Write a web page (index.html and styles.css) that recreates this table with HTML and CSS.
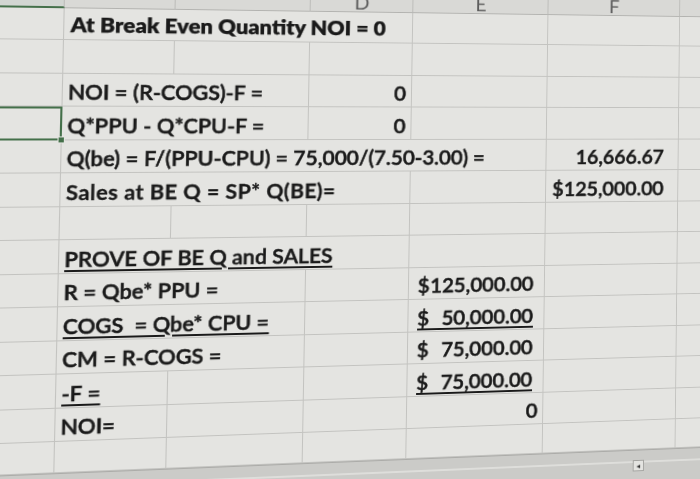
FILE: index.html
```html
<!DOCTYPE html>
<html lang="en">
<head>
<meta charset="utf-8">
<title>Break Even</title>
<link rel="stylesheet" href="styles.css">
</head>
<body>
<div class="sheet">
  <div class="grid">
    <div class="hd hd-a"></div><div class="hd"></div><div class="hd"></div><div class="hd">D</div><div class="hd">E</div><div class="hd">F</div><div class="hd"></div>

    <div class="c"></div><div class="c s3 b title">At Break Even Quantity NOI = 0</div><div class="c"></div><div class="c"></div><div class="c"></div>

    <div class="c"></div><div class="c"></div><div class="c"></div><div class="c"></div><div class="c"></div><div class="c"></div><div class="c"></div>

    <div class="c"></div><div class="c s2">NOI = (R-COGS)-F =</div><div class="c r">0</div><div class="c"></div><div class="c"></div><div class="c"></div>

    <div class="c sel"></div><div class="c s2">Q*PPU - Q*CPU-F =</div><div class="c r">0</div><div class="c"></div><div class="c"></div><div class="c"></div>

    <div class="c"></div><div class="c s4">Q(be) = F/(PPU-CPU) = 75,000/(7.50-3.00) =</div><div class="c r pad">16,666.67</div><div class="c"></div>

    <div class="c"></div><div class="c s3 sb">Sales at BE Q = SP* Q(BE)=</div><div class="c"></div><div class="c r pad">$125,000.00</div><div class="c"></div>

    <div class="c"></div><div class="c"></div><div class="c"></div><div class="c"></div><div class="c"></div><div class="c"></div><div class="c"></div>

    <div class="c"></div><div class="c s3"><span class="u">PROVE OF BE Q and SALES</span></div><div class="c"></div><div class="c"></div><div class="c"></div>

    <div class="c"></div><div class="c s2">R = Qbe* PPU =</div><div class="c"></div><div class="c acc"><span class="m"><span>$</span><span>125,000.00</span></span></div><div class="c"></div><div class="c"></div>

    <div class="c"></div><div class="c s2"><span class="u">COGS  = Qbe* CPU =</span></div><div class="c"></div><div class="c acc"><span class="m mu"><span>$</span><span>50,000.00</span></span></div><div class="c"></div><div class="c"></div>

    <div class="c"></div><div class="c s2">CM = R-COGS =</div><div class="c"></div><div class="c acc"><span class="m"><span>$</span><span>75,000.00</span></span></div><div class="c"></div><div class="c"></div>

    <div class="c"></div><div class="c"><span class="u">-F =</span></div><div class="c"></div><div class="c"></div><div class="c acc"><span class="m mu"><span>$</span><span>75,000.00</span></span></div><div class="c"></div><div class="c"></div>

    <div class="c"></div><div class="c">NOI=</div><div class="c"></div><div class="c"></div><div class="c r">0</div><div class="c"></div><div class="c"></div>

    <div class="c"></div><div class="c"></div><div class="c"></div><div class="c"></div><div class="c"></div><div class="c"></div><div class="c"></div>
  </div>
  <div class="band">
    <div class="band-left"></div>
    <div class="arrow">&#9666;</div>
    <div class="track"></div>
  </div>
</div>
</body>
</html>
```

FILE: styles.css
```css
html, body {
  margin: 0;
  height: 100%;
  overflow: hidden;
  background: #d0d0cd;
}

.sheet {
  width: 730px;
  background: #e4e4e1;
  font-family: Lato, "Open Sans", sans-serif;
  color: #1a1a1a;
  transform-origin: 64px 70px;
  transform: translateY(-30px) matrix3d(1.060167, 0.010952, 0, 0.00012431, -0.022163, 0.992419, 0, -0.00001881, 0, 0, 1, 0, 0, 0, 0, 1);
}

.grid {
  display: grid;
  grid-template-columns: 64px 106px 133px 104px 141px 142px 40px;
  grid-template-rows: 38px 32px repeat(12, 33.5px) 31px;
}

.hd {
  box-sizing: border-box;
  background: #d9d9d6;
  border-right: 1px solid #bcbcb9;
  border-bottom: 1px solid #b3b3b0;
  display: flex;
  justify-content: center;
  align-items: flex-end;
  font-size: 20px;
  line-height: 1;
  color: #5c5c5c;
  padding-bottom: 0;
}

.hd-a {
  background: #d2d6d2;
  border-bottom: 2px solid #44704a;
}

.c {
  box-sizing: border-box;
  border-right: 1px solid #c3c3c0;
  border-bottom: 1px solid #c3c3c0;
  display: flex;
  align-items: flex-end;
  padding: 0 5px 4px;
  font-size: 21px;
  font-weight: 600;
  line-height: 1;
  white-space: pre;
  min-width: 0;
  -webkit-text-stroke: 0.55px #1a1a1a;
}

.s2 { grid-column: span 2; }
.s3 { grid-column: span 3; }
.s4 { grid-column: span 4; }

.b {
  font-weight: 800;
  font-size: 21.5px;
  -webkit-text-stroke: 0.25px #1a1a1a;
}
.sb {
  font-weight: 700;
  letter-spacing: 0.4px;
  -webkit-text-stroke: 0.3px #1a1a1a;
}
.title { padding-left: 6px; }

.r { justify-content: flex-end; }
.pad { padding-right: 15px; }

.u {
  text-decoration: underline;
  text-decoration-thickness: 2px;
  text-underline-offset: 3px;
}

.acc {
  padding-left: 9px;
  padding-right: 11px;
}

.m {
  flex: 1;
  display: flex;
  justify-content: space-between;
}

.mu {
  border-bottom: 2px solid #1a1a1a;
  padding-bottom: 1px;
  margin-bottom: -3px;
}

.sel {
  position: relative;
  outline: 2px solid #44704a;
  outline-offset: -2px;
}

.sel::after {
  content: "";
  position: absolute;
  right: -4px;
  bottom: -4px;
  width: 5px;
  height: 5px;
  background: #44704a;
  border: 1px solid #e4e4e1;
}

.band {
  height: 80px;
  background: #cbcbc8;
  border-top: 1px solid #acaca9;
  display: flex;
  align-items: flex-start;
  padding-top: 10px;
}

.band-left {
  flex: 0 0 644px;
  height: 2px;
  margin-top: 1px;
  background: #dededb;
}

.arrow {
  box-sizing: border-box;
  width: 12px;
  height: 12px;
  border: 1px solid #a3a3a0;
  background: #e4e4e1;
  color: #333;
  font-size: 8px;
  line-height: 1;
  display: flex;
  align-items: center;
  justify-content: center;
}

.track {
  flex: 1;
  height: 2px;
  margin-top: 1px;
  background: #dededb;
}
```
